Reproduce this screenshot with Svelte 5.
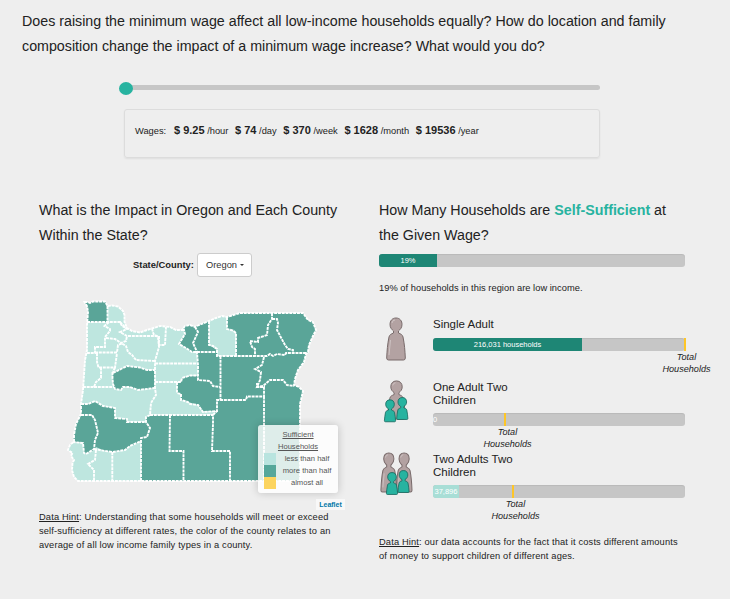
<script>
  const wages = [
    { amount: '9.25', unit: 'hour' },
    { amount: '74', unit: 'day' },
    { amount: '370', unit: 'week' },
    { amount: '1628', unit: 'month' },
    { amount: '19536', unit: 'year' }
  ];

  const legend = [
    { label: 'less than half', color: '#b9e4df' },
    { label: 'more than half', color: '#55a79a' },
    { label: 'almost all', color: '#fcd45e' }
  ];

  // Each figure is [x, y, width, height, kind] inside the 36 × 46 pictogram.
  const households = [
    {
      name: ['Single Adult'], fill: 149, tone: 'dark', value: '216,031 households', marker: 251, offset: 227,
      figures: [[7, 1, 20, 44, 'adult']]
    },
    {
      name: ['One Adult Two', 'Children'], fill: 0, tone: 'none', value: '0', marker: 71, offset: 48,
      figures: [[8, 2, 19, 40, 'adult'], [17.3, 19, 12, 23, 'child'], [5, 21.3, 12, 23, 'child']]
    },
    {
      name: ['Two Adults Two', 'Children'], fill: 26, tone: 'light', value: '37,896', marker: 79, offset: 56,
      figures: [[1.3, 1, 17, 41, 'adult'], [16.6, 1, 17, 41, 'adult'], [18.5, 19, 12, 23, 'child'], [7, 21, 12, 23, 'child']]
    }
  ];

  const state =
    'M84.5 302L88 302L90 303L93 301.5H105L107.5 306L112 305.5L118 306.5L123 311L124.5 315V322L127 328L132 331L140 332.5L147 330L152 328.5L160 326L170 327L176 330L182 330L185 326L190 325L195 327L199 325L209 321L216 318L222 316L227 317L240 313H303L308 320L313 322L316 330L313 336L309 345L308 352L306 354L304 362L298 370L295 379L294 385L299 387L303 391L301 400L300 404V481H78L74 477L72 470L72.5 463L74 460L71 456L72.5 453L68 450L70 445L74 441.5V435L76 424L81 414L81 404L83 390L84 375L85 360L87 350V325L88 312L87 306Z';

  const darkAreas = [
    'M84.5 302L88 302L90 303L93 301.5H105L107.5 306V322H87L88 312L87 306Z',
    'M113 373L121 369L127 366L140 367.5L147 370L155 370L154.5 388L138 390L130 387L123 387L121 390L115 389L113 384L112.5 378Z',
    'M81 404L88 404L95 401L103 406L115 408V418L127 419V422H146L150 428L147 437L141 438V442L130 446L125 450L113 452L105 451L96 447L94 450L86 454L84 453L83 443L80 442L73 442L74 435L76 424L81 414Z',
    'M185 326L190 325L195 327L199 325L209 321V345L217 350L217 356H236V333L233 330L227 329V317L240 313H303L308 320L313 322L316 330L313 336L309 345L308 352L306 354L304 362L298 370L295 379L294 385L299 387L303 391L301 400L300 404V481H141V438L147 437L150 428L146 422V417L150 415H213L217 411H203L198 405L188 402L181 400V394L177 393V382H181L182 378L190 376H198L197 352H192L186 348L179 344L185 334L184 330Z'
  ];

  const borders = [
    'M107.5 306V322M87 322H120L122 326L126 328L127 328',
    'M109 322L104.5 326L110 329V331L105 337V347H95V353H87',
    'M120 322L127 329L120 332L127 336H158',
    'M106 338L115 339L121 343L126 341L127 336',
    'M95 352.5H117L118 345L122 343.5L126 346L128 352L132 355L136 360L155 361',
    'M97 353V362L98.5 367.5H115L117 353M101 367.5V378L96 382L94 387H83M115 367.5L113 372',
    'M113 373L121 369L127 366L140 367.5L147 370H155M112.5 372V378L113 384L115 389L121 390L123 387L130 387L138 390L154.5 388M94 387H114',
    'M152 328.5L153.5 334L158 337L159 347L155 361V388L156 395L151 403L150 415L146 417V422L150 428L147 437L141 438V481',
    'M159 336V345H165L166 327',
    'M182 330H184L185 334L179 344L186 348L192 352H217M195 327L198 332L193 343L197 352L198 365V380L210 381L213 386L220 387',
    'M209 321V345L213 346L217 349V356H255L267 356L270 354L273 356L277 354L285 355L286 353H307',
    'M227 317V329L233 330.5L236 333V356',
    'M272 313V319L268 325L267 335L258 338V342L250 341L252 347L255 349V356M272 319H277L278 323L277 330L285 345L288 349L293 350L293 353',
    'M155 363.5H197M155 382H181L182 378L190 375.5H198M177 382V393L181 394V400L188 402L190 404L198 405L203 412L217 411V400H246L247 396.5H264V387H257V383',
    'M220.5 356V400M264 357L262 365L255 369L261 372L260 380L257 387L263 386L270 380L283 380L287 385L294 386',
    'M81 404L88 404L95 401L103 406L115 408V418L127 419V422H146',
    'M81 415H92L95 420L98 433L95 440L94 449L86 454L84 453L83 443L73 442M94 449L105 451L113 452L125 450L130 446L141 441',
    'M96 450L95 460L88 464L94 470V481M112.3 452V481',
    'M150 415H213V424L212 451H230V481M213 415L217 411M170 415L169.5 451H183.5V481M264 396.5V481'
  ];

  // Head, neck and a sloping torso on a 20 × 44 grid.
  const shapes = {
    adult:
      'M10 1C6 1 4 4 4 7.5C4 11 6 12.5 7.5 14V16C5.5 17 3.5 17.5 3 20C1.5 27 1 34 .7 41Q.7 43 2.5 43H17.5Q19.3 43 19.3 41C19 34 18.5 27 17 20C16.5 17.5 14.5 17 12.5 16V14C14 12.5 16 11 16 7.5C16 4 14 1 10 1Z',
    child:
      'M10 1C5 1 2.8 5 2.8 9.5C2.8 14 5 16.5 7.5 18.5V20.5C5.5 22 3 22 2.5 25C1.5 30 1 36 .7 41Q.7 43 2.5 43H17.5Q19.3 43 19.3 41C19 36 18.5 30 17.5 25C17 22 14.5 22 12.5 20.5V18.5C15 16.5 17.2 14 17.2 9.5C17.2 5 15 1 10 1Z'
  };
</script>

<main>
  <p class="intro">
    Does raising the minimum wage affect all low-income households equally? How do location and family<br />
    composition change the impact of a minimum wage increase? What would you do?
  </p>

  <section class="wage">
    <div class="slider"><span class="knob"></span></div>
    <div class="panel">
      <span class="lead">Wages:</span>
      {#each wages as w}
        <span class="amount"><b>$ {w.amount}</b> /{w.unit}</span>
      {/each}
    </div>
  </section>

  <div class="columns">
    <section class="left">
      <h2>What is the Impact in Oregon and Each County<br />Within the State?</h2>
      <div class="picker">
        <b>State/County:</b>
        <button>Oregon<i class="caret"></i></button>
      </div>
      <div class="map">
        <svg width="300" height="220" viewBox="45 290 300 220">
          <path d={state} fill="#bee6df" />
          {#each darkAreas as d}<path {d} fill="#5aa598" />{/each}
          <path d={state} class="border" />
          {#each borders as d}<path {d} class="border" />{/each}
        </svg>
        <div class="legend">
          <u>Sufficient</u>
          <u>Households</u>
          {#each legend as item}
            <div><i style="background:{item.color}"></i><span>{item.label}</span></div>
          {/each}
        </div>
        <span class="credit">Leaflet</span>
      </div>
      <p class="hint">
        <u>Data Hint</u>: Understanding that some households will meet or exceed<br />
        self-sufficiency at different rates, the color of the county relates to an<br />
        average of all low income family types in a county.
      </p>
    </section>

    <section class="right">
      <h2>How Many Households are <strong>Self-Sufficient</strong> at<br />the Given Wage?</h2>
      <div class="bar"><div class="fill dark" style="width:58px">19%</div></div>
      <p class="note">19% of households in this region are low income.</p>
      {#each households as h, i}
        <div class="row row{i}">
          <svg class="people" width="36" height="46" viewBox="0 0 36 46">
            {#each h.figures as [x, y, width, height, kind]}
              <svg {x} {y} {width} {height} viewBox="0 0 20 44" preserveAspectRatio="none" overflow="visible">
                <path d={shapes[kind]} class={kind} vector-effect="non-scaling-stroke" />
                {#if kind === 'adult'}
                  <path d="M6 6Q6.500 3 9 3M4.500 23L3 38" class="shine" />
                {/if}
              </svg>
            {/each}
          </svg>
          <div class="data">
            <h3>{#each h.name as line}<span>{line}</span>{/each}</h3>
            <div class="bar">
              <div class="fill {h.tone}" style="width:{h.fill}px">{h.value}</div>
              <i class="marker" style="left:{h.marker}px"></i>
            </div>
            <em style="margin-left:{h.offset}px">Total<br />Households</em>
          </div>
        </div>
      {/each}
      <p class="hint">
        <u>Data Hint</u>: our data accounts for the fact that it costs different amounts<br />
        of money to support children of different ages.
      </p>
    </section>
  </div>
</main>

<style>
  :global(body) { background: #eee; overflow: hidden; }
  main {
    box-sizing: border-box;
    width: 730px;
    height: 599px;
    padding-top: 9px;
    overflow: hidden;
    background: #eee;
    color: #222;
    font-family: 'Liberation Sans', Arial, sans-serif;
    font-size: 9.3px;
    white-space: nowrap;
  }
  p, h2, h3 { margin: 0; font-weight: 400; }
  .intro { padding-left: 22px; font-size: 14.26px; line-height: 25px; }
  .wage { margin: 26px 0 0 124px; width: 476px; }
  .slider { position: relative; height: 5px; border-radius: 3px; background: #c6c6c6; }
  .knob { position: absolute; left: -5px; top: -3px; width: 14px; height: 13px; border-radius: 50%; background: #27b3a0; }
  .panel {
    box-sizing: border-box;
    display: flex;
    align-items: baseline;
    height: 49px;
    margin-top: 19px;
    padding: 13px 0 0 10px;
    border: 1px solid #dcdcdc;
    border-radius: 3px;
    box-shadow: 0 1px 2px #0001;
    line-height: 15px;
  }
  .lead { width: 39px; }
  .amount { margin-right: 6.7px; }
  .amount b { font-size: 11px; }
  .columns { display: flex; margin-top: 40px; }
  .left { width: 301px; margin-left: 39px; }
  .right { width: 306px; margin-left: 39px; }
  h2 { font-size: 14.28px; line-height: 25px; }
  h2 strong { color: #27b3a0; }
  .picker { display: flex; align-items: center; height: 24px; margin: 5px 0 0 94px; }
  .picker > b { width: 61px; padding-bottom: 2px; font-size: 9.4px; }
  .picker button {
    display: flex;
    align-items: center;
    box-sizing: border-box;
    height: 24px;
    width: 55px;
    margin-left: 3px;
    padding: 0 8px;
    border: 1px solid #ccc;
    border-radius: 3px;
    background: #fff;
    color: #333;
    font: 9.3px 'Liberation Sans', Arial, sans-serif;
  }
  .caret { margin-left: 3px; border: 2px solid transparent; border-top-color: #333; border-bottom: 0; }
  .map { position: relative; height: 220px; margin: 13px 0 0 6px; }
  .map svg { display: block; }
  .border { fill: none; stroke: #fff; stroke-width: 1.9; stroke-dasharray: 3 .8; }
  .legend {
    position: absolute;
    left: 213px;
    top: 135px;
    box-sizing: border-box;
    width: 80px;
    height: 68px;
    padding: 4px 6px;
    border-radius: 3px;
    background: #fffc;
    box-shadow: 0 0 8px #0003;
    color: #555;
    font-size: 7.6px;
    line-height: 12px;
    text-align: center;
  }
  .legend > u { display: block; }
  .legend div { display: flex; height: 12px; }
  .legend div i { width: 12px; }
  .legend div span { flex: 1; padding-left: 6px; }
  .credit {
    position: absolute;
    left: 271px;
    top: 209px;
    width: 29px;
    background: #fff9;
    color: #0078a8;
    font-size: 7px;
    font-weight: 700;
    line-height: 11px;
    text-align: center;
  }
  .hint { line-height: 14px; letter-spacing: .145px; }
  .bar { position: relative; height: 13px; border-radius: 3px; background: #c6c6c6; box-shadow: inset 0 1px 1px #0001; }
  .fill {
    height: 100%;
    border-radius: 3px 0 0 3px;
    color: #fff;
    font-size: 7.5px;
    line-height: 13px;
    text-align: center;
  }
  .dark { background: #1e8675; }
  .light { background: #a8ded6; }
  .marker { position: absolute; top: 0; width: 2px; height: 100%; background: #fec627; }
  .right > .bar { margin-top: 6px; }
  .note { margin-top: 14px; line-height: 14px; letter-spacing: .03px; }
  .row { display: flex; }
  .row0 { height: 62px; margin-top: 21px; }
  .row1 { height: 73px; }
  .row2 { height: 84px; }
  .people { flex: none; width: 36px; height: 46px; }
  .data { width: 252px; margin-left: 18px; }
  h3 { font-size: 11.5px; line-height: 13px; }
  .row0 h3 { padding-top: 2px; margin-bottom: 7px; }
  .row1 h3 { padding-top: 3px; margin-bottom: 6px; }
  .row2 h3 { padding-top: 2px; margin-bottom: 6px; }
  h3 span { display: block; }
  em { display: block; width: 53px; font-size: 9.1px; line-height: 12px; text-align: center; }
  .adult { fill: #b3a2a2; stroke: #786a6a; stroke-width: 1; }
  .shine { fill: none; stroke: #cec3c3; stroke-width: 1; }
  .child { fill: #27b3a0; stroke: #16665c; stroke-width: .8; }
</style>
